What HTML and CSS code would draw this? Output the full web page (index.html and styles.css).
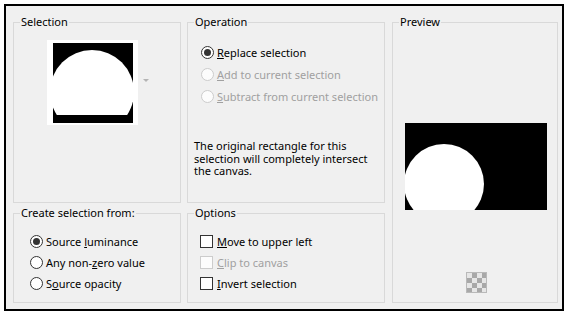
FILE: index.html
```html
<!DOCTYPE html>
<html lang="en">
<head>
  <meta charset="UTF-8">
  <title>Selection from Mask</title>
  <link rel="stylesheet" href="styles.css">
</head>
<body>

<div class="dialog">
  <div class="panels">

    <fieldset class="group sel-group">
      <legend>Selection</legend>
      <div class="thumb-row">
        <svg class="thumb" width="91" height="85" viewBox="0 0 91 85">
          <defs>
            <clipPath id="thumbClip"><rect x="6" y="3" width="80" height="72"/></clipPath>
          </defs>
          <rect width="91" height="85" fill="#fff"/>
          <rect x="6" y="3" width="80" height="80" fill="#000"/>
          <circle cx="45" cy="52" r="42" fill="#fff" clip-path="url(#thumbClip)"/>
        </svg>
        <span class="drop-arrow"></span>
      </div>
    </fieldset>

    <fieldset class="group op-group">
      <legend>Operation</legend>
      <div class="choices">
        <label class="choice"><input type="radio" name="op" checked><span><u>R</u>eplace selection</span></label>
        <label class="choice disabled"><input type="radio" name="op" disabled><span><u>A</u>dd to current selection</span></label>
        <label class="choice disabled"><input type="radio" name="op" disabled><span><u>S</u>ubtract from current selection</span></label>
      </div>
      <p class="note">The original rectangle for this<br>selection will completely intersect<br>the canvas.</p>
    </fieldset>

    <fieldset class="group preview-group">
      <legend>Preview</legend>
      <svg class="preview" width="142" height="87" viewBox="0 0 142 87">
        <defs>
          <clipPath id="prevClip"><rect width="142" height="87"/></clipPath>
        </defs>
        <rect width="142" height="87" fill="#000"/>
        <circle cx="39" cy="61" r="40" fill="#fff" clip-path="url(#prevClip)"/>
      </svg>
      <span class="checker"></span>
    </fieldset>

    <fieldset class="group create-group">
      <legend>Create selection from:</legend>
      <div class="choices small">
        <label class="choice"><input type="radio" name="src" checked><span>Source <u>l</u>uminance</span></label>
        <label class="choice"><input type="radio" name="src"><span>Any non-<u>z</u>ero value</span></label>
        <label class="choice"><input type="radio" name="src"><span>S<u>o</u>urce opacity</span></label>
      </div>
    </fieldset>

    <fieldset class="group opt-group">
      <legend>Options</legend>
      <div class="choices small">
        <label class="choice"><input type="checkbox"><span><u>M</u>ove to upper left</span></label>
        <label class="choice disabled"><input type="checkbox" disabled><span><u>C</u>lip to canvas</span></label>
        <label class="choice"><input type="checkbox"><span><u>I</u>nvert selection</span></label>
      </div>
    </fieldset>

  </div>
</div>

</body>
</html>
```

FILE: styles.css
```css
html {
  background: #fff;
}

body {
  margin: 0;
  font-family: "Noto Sans", "DejaVu Sans", sans-serif;
  font-size: 11px;
  color: #000;
}

.dialog {
  margin: 4px;
  width: 556px;
  height: 303px;
  border: 2px solid #000;
  background: #f0f0f0;
}

.panels {
  display: grid;
  grid-template-columns: 168px 198px 167px;
  grid-template-rows: 189px 98px;
  column-gap: 6px;
  row-gap: 2px;
  padding: 8px 0 0 7px;
}

.group {
  margin: 0;
  padding: 0;
  min-width: 0;
  border: 1px solid #d9d9d9;
}

.group legend {
  margin-left: 6px;
  padding: 0 1px;
  line-height: 16px;
}

.preview-group {
  grid-column: 3;
  grid-row: 1 / 3;
  margin-left: 1px;
}

/* Selection thumbnail */
.thumb-row {
  display: flex;
  align-items: center;
  margin: 10px 0 0 33px;
}

.thumb {
  display: block;
}

.drop-arrow {
  width: 0;
  height: 0;
  margin-left: 5px;
  margin-top: -4px;
  border-left: 3px solid transparent;
  border-right: 3px solid transparent;
  border-top: 3px solid #b4b4b4;
}

/* Radio / checkbox lists */
.choices {
  display: flex;
  flex-direction: column;
  margin: 11px 0 0 13px;
}

.choices.small {
  margin: 10px 0 0 16px;
}

.opt-group .choices.small {
  margin-left: 12px;
}

.choice {
  display: flex;
  align-items: center;
  height: 22px;
  white-space: nowrap;
}

.small .choice {
  height: 21px;
}

.choice input {
  appearance: none;
  -webkit-appearance: none;
  margin: 0 3px 0 0;
  width: 13px;
  height: 13px;
  flex: none;
  background: #fff;
  border: 1px solid #333;
}

.opt-group .choice input {
  margin-right: 4px;
}

.choice input[type="radio"] {
  border-radius: 50%;
  display: grid;
  place-items: center;
}

.choice input[type="radio"]:checked::after {
  content: "";
  width: 7px;
  height: 7px;
  border-radius: 50%;
  background: #333;
}

.choice.disabled {
  color: #a0a0a0;
}

.choice.disabled input {
  border-color: #cccccc;
  background: #fcfcfc;
}

.note {
  margin: 33px 0 0 6px;
  line-height: 12.5px;
}

/* Preview */
.preview {
  display: block;
  margin: 93px 0 0 12px;
}

.checker {
  display: block;
  width: 19px;
  height: 19px;
  margin: 62px 0 0 73px;
  border: 1px solid #b9b9b9;
  background-color: #e6e6e6;
  background-image:
    linear-gradient(45deg, #a8a8a8 25%, transparent 25%, transparent 75%, #a8a8a8 75%),
    linear-gradient(45deg, #a8a8a8 25%, transparent 25%, transparent 75%, #a8a8a8 75%);
  background-size: 10px 10px;
  background-position: 0 0, 5px 5px;
}
```
